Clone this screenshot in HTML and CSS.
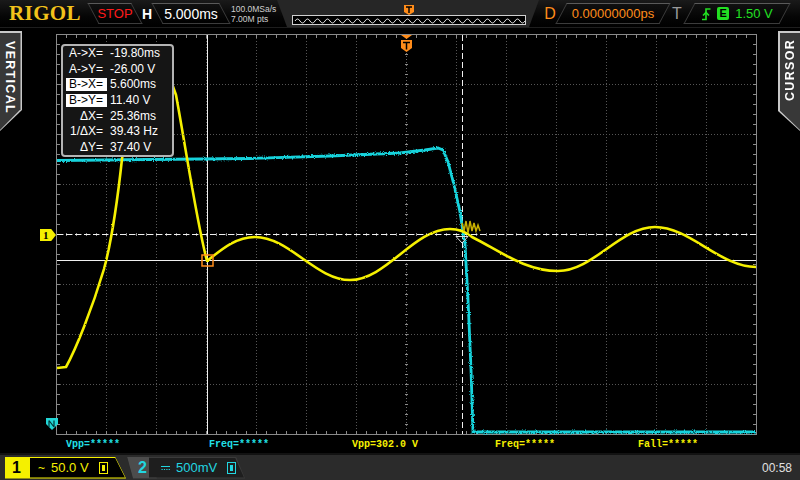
FILE: index.html
```html
<!DOCTYPE html>
<html>
<head>
<meta charset="utf-8">
<link rel="stylesheet" href="styles.css">
</head>
<body>
<div class="scope">
  <header class="topbar">
    <div class="logo">RIGOL</div>
    <div class="pbox lean-left stop-box"><span class="stop">STOP</span></div>
    <div class="hlabel">H</div>
    <div class="pbox lean-left time-box"><span>5.000ms</span></div>
    <div class="rate"><span>100.0MSa/s</span><span>7.00M pts</span></div>
    <div class="memory">
      <svg width="262" height="28" viewBox="0 0 262 28">
        <path d="M0,0 L262,0 L252,27 L10,27 Z" fill="#262626"/>
        <rect x="15.5" y="15.5" width="233" height="9" fill="#000" stroke="#cfcfcf"/>
        <path class="memwave" d="M18,21 q2.5,-4 5,0 t5,0 t5,0 t5,0 t5,0 t5,0 t5,0 t5,0 t5,0 t5,0 t5,0 t5,0 t5,0 t5,0 t5,0 t5,0 t5,0 t5,0 t5,0 t5,0 t5,0 t5,0 t5,0 t5,0 t5,0 t5,0 t5,0 t5,0 t5,0 t5,0 t5,0 t5,0 t5,0 t5,0 t5,0 t5,0 t5,0 t5,0 t5,0 t5,0 t5,0 t5,0 t5,0 t5,0 t5,0 t5,0"/>
        <path d="M127,5 h10 v7 l-5,3 l-5,-3 Z" fill="#ff8c1a"/>
        <path d="M129,7 h6 M132,7 v6" stroke="#000" stroke-width="1.4"/>
      </svg>
    </div>
    <div class="dlabel">D</div>
    <div class="pbox delay-box"><span>0.00000000ps</span></div>
    <div class="tlabel">T</div>
    <div class="pbox trig-box">
      <svg class="edge" width="10" height="14" viewBox="0 0 10 14">
        <path d="M1,12.5 H5 V2 H9.5" fill="none" stroke="#22e022" stroke-width="1.6"/>
        <path d="M2,8.5 L5,5.5 L8,8.5" fill="none" stroke="#22e022" stroke-width="1.6"/>
      </svg>
      <span class="ebadge">E</span>
      <span class="tlevel">1.50 V</span>
    </div>
  </header>

  <div class="main">
    <div class="side side-left">
      <div class="tab tab-left"><div class="tab-inner"><span>VERTICAL</span></div></div>
    </div>

    <div class="center">
      <div class="screen">
        <svg class="grid" width="701" height="401" viewBox="56 35 701 401">
          <defs>
            <filter id="noise" x="-5%" y="-5%" width="110%" height="110%">
              <feTurbulence type="fractalNoise" baseFrequency="0.9" numOctaves="1" seed="3"/>
              <feDisplacementMap in="SourceGraphic" scale="3.5" xChannelSelector="R" yChannelSelector="G"/>
            </filter>
            <filter id="noise2" x="-5%" y="-5%" width="110%" height="110%">
              <feTurbulence type="fractalNoise" baseFrequency="0.6" numOctaves="1" seed="7"/>
              <feDisplacementMap in="SourceGraphic" scale="2" xChannelSelector="R" yChannelSelector="G"/>
            </filter>
          </defs>
          <g class="dots">
            <path d="M106.5,36V435 M156.5,36V435 M206.5,36V435 M256.5,36V435 M306.5,36V435 M356.5,36V435 M456.5,36V435 M506.5,36V435 M556.5,36V435 M606.5,36V435 M656.5,36V435 M706.5,36V435"/>
            <path d="M57,85.5H756 M57,135.5H756 M57,185.5H756 M57,285.5H756 M57,335.5H756 M57,385.5H756"/>
          </g>
          <g class="axis">
            <path d="M406.5,36V435 M57,235.5H756"/>
          </g>
          <g class="border">
            <rect x="56.5" y="35.5" width="700" height="400" fill="none"/>
            <path d="M57,45.5h3 M57,55.5h3 M57,65.5h3 M57,75.5h3 M57,85.5h3 M57,95.5h3 M57,105.5h3 M57,115.5h3 M57,125.5h3 M57,135.5h3 M57,145.5h3 M57,155.5h3 M57,165.5h3 M57,175.5h3 M57,185.5h3 M57,195.5h3 M57,205.5h3 M57,215.5h3 M57,225.5h3 M57,235.5h3 M57,245.5h3 M57,255.5h3 M57,265.5h3 M57,275.5h3 M57,285.5h3 M57,295.5h3 M57,305.5h3 M57,315.5h3 M57,325.5h3 M57,335.5h3 M57,345.5h3 M57,355.5h3 M57,365.5h3 M57,375.5h3 M57,385.5h3 M57,395.5h3 M57,405.5h3 M57,415.5h3 M57,425.5h3"/>
            <path d="M756,45.5h-3 M756,55.5h-3 M756,65.5h-3 M756,75.5h-3 M756,85.5h-3 M756,95.5h-3 M756,105.5h-3 M756,115.5h-3 M756,125.5h-3 M756,135.5h-3 M756,145.5h-3 M756,155.5h-3 M756,165.5h-3 M756,175.5h-3 M756,185.5h-3 M756,195.5h-3 M756,205.5h-3 M756,215.5h-3 M756,225.5h-3 M756,235.5h-3 M756,245.5h-3 M756,255.5h-3 M756,265.5h-3 M756,275.5h-3 M756,285.5h-3 M756,295.5h-3 M756,305.5h-3 M756,315.5h-3 M756,325.5h-3 M756,335.5h-3 M756,345.5h-3 M756,355.5h-3 M756,365.5h-3 M756,375.5h-3 M756,385.5h-3 M756,395.5h-3 M756,405.5h-3 M756,415.5h-3 M756,425.5h-3"/>
            <path d="M66.5,36v3 M76.5,36v3 M86.5,36v3 M96.5,36v3 M106.5,36v3 M116.5,36v3 M126.5,36v3 M136.5,36v3 M146.5,36v3 M156.5,36v3 M166.5,36v3 M176.5,36v3 M186.5,36v3 M196.5,36v3 M206.5,36v3 M216.5,36v3 M226.5,36v3 M236.5,36v3 M246.5,36v3 M256.5,36v3 M266.5,36v3 M276.5,36v3 M286.5,36v3 M296.5,36v3 M306.5,36v3 M316.5,36v3 M326.5,36v3 M336.5,36v3 M346.5,36v3 M356.5,36v3 M366.5,36v3 M376.5,36v3 M386.5,36v3 M396.5,36v3 M406.5,36v3 M416.5,36v3 M426.5,36v3 M436.5,36v3 M446.5,36v3 M456.5,36v3 M466.5,36v3 M476.5,36v3 M486.5,36v3 M496.5,36v3 M506.5,36v3 M516.5,36v3 M526.5,36v3 M536.5,36v3 M546.5,36v3 M556.5,36v3 M566.5,36v3 M576.5,36v3 M586.5,36v3 M596.5,36v3 M606.5,36v3 M616.5,36v3 M626.5,36v3 M636.5,36v3 M646.5,36v3 M656.5,36v3 M666.5,36v3 M676.5,36v3 M686.5,36v3 M696.5,36v3 M706.5,36v3 M716.5,36v3 M726.5,36v3 M736.5,36v3 M746.5,36v3"/>
            <path d="M66.5,435v-3 M76.5,435v-3 M86.5,435v-3 M96.5,435v-3 M106.5,435v-3 M116.5,435v-3 M126.5,435v-3 M136.5,435v-3 M146.5,435v-3 M156.5,435v-3 M166.5,435v-3 M176.5,435v-3 M186.5,435v-3 M196.5,435v-3 M206.5,435v-3 M216.5,435v-3 M226.5,435v-3 M236.5,435v-3 M246.5,435v-3 M256.5,435v-3 M266.5,435v-3 M276.5,435v-3 M286.5,435v-3 M296.5,435v-3 M306.5,435v-3 M316.5,435v-3 M326.5,435v-3 M336.5,435v-3 M346.5,435v-3 M356.5,435v-3 M366.5,435v-3 M376.5,435v-3 M386.5,435v-3 M396.5,435v-3 M406.5,435v-3 M416.5,435v-3 M426.5,435v-3 M436.5,435v-3 M446.5,435v-3 M456.5,435v-3 M466.5,435v-3 M476.5,435v-3 M486.5,435v-3 M496.5,435v-3 M506.5,435v-3 M516.5,435v-3 M526.5,435v-3 M536.5,435v-3 M546.5,435v-3 M556.5,435v-3 M566.5,435v-3 M576.5,435v-3 M586.5,435v-3 M596.5,435v-3 M606.5,435v-3 M616.5,435v-3 M626.5,435v-3 M636.5,435v-3 M646.5,435v-3 M656.5,435v-3 M666.5,435v-3 M676.5,435v-3 M686.5,435v-3 M696.5,435v-3 M706.5,435v-3 M716.5,435v-3 M726.5,435v-3 M736.5,435v-3 M746.5,435v-3"/>
            <path d="M405,55.5h3 M405,65.5h3 M405,75.5h3 M405,85.5h3 M405,95.5h3 M405,105.5h3 M405,115.5h3 M405,125.5h3 M405,135.5h3 M405,145.5h3 M405,155.5h3 M405,165.5h3 M405,175.5h3 M405,185.5h3 M405,195.5h3 M405,205.5h3 M405,215.5h3 M405,225.5h3 M405,245.5h3 M405,255.5h3 M405,265.5h3 M405,275.5h3 M405,285.5h3 M405,295.5h3 M405,305.5h3 M405,315.5h3 M405,325.5h3 M405,335.5h3 M405,345.5h3 M405,355.5h3 M405,365.5h3 M405,375.5h3 M405,385.5h3 M405,395.5h3 M405,405.5h3 M405,415.5h3 M405,425.5h3"/>
            <path d="M66.5,234v3 M76.5,234v3 M86.5,234v3 M96.5,234v3 M106.5,234v3 M116.5,234v3 M126.5,234v3 M136.5,234v3 M146.5,234v3 M156.5,234v3 M166.5,234v3 M176.5,234v3 M186.5,234v3 M196.5,234v3 M206.5,234v3 M216.5,234v3 M226.5,234v3 M236.5,234v3 M246.5,234v3 M256.5,234v3 M266.5,234v3 M276.5,234v3 M286.5,234v3 M296.5,234v3 M306.5,234v3 M316.5,234v3 M326.5,234v3 M336.5,234v3 M346.5,234v3 M356.5,234v3 M366.5,234v3 M376.5,234v3 M386.5,234v3 M396.5,234v3 M416.5,234v3 M426.5,234v3 M436.5,234v3 M446.5,234v3 M456.5,234v3 M466.5,234v3 M476.5,234v3 M486.5,234v3 M496.5,234v3 M506.5,234v3 M516.5,234v3 M526.5,234v3 M536.5,234v3 M546.5,234v3 M556.5,234v3 M566.5,234v3 M576.5,234v3 M586.5,234v3 M596.5,234v3 M606.5,234v3 M616.5,234v3 M626.5,234v3 M636.5,234v3 M646.5,234v3 M656.5,234v3 M666.5,234v3 M676.5,234v3 M686.5,234v3 M696.5,234v3 M706.5,234v3 M716.5,234v3 M726.5,234v3 M736.5,234v3 M746.5,234v3"/>
          </g>

          <path class="cur-dash" d="M462.5,36V435 M57,235.5H756"/>
          <path class="cur-solid" d="M207.5,36V435 M57,261.5H756"/>

          <path class="trace2" d="M57,161.5 L150,160.5 L250,159.5 L330,157 L400,154 L425,151 L438,149 L443,151 L448,163 L454,186 L460,213 L465,246 L468,300 L471,370 L473,433 L756,433"/>

          <path class="trace1" d="M57,369 L66,368 C76,350 92,310 104,270 C110,248 116,215 122,160 L130,110 L150,70 L166,68 L176,96 C186,150 197,225 207,262 C222,250 236,238 255,238 C289,238 316,281 350,281 C386,281 414,230 450,230 C460,230 466,233 472,238 C500,252 525,272 558,272 C593,272 620,228 655,228 C690,228 720,268 756,268"/>
          <path class="ring" d="M462,224 l2,8 l2,-10 l2,12 l2,-12 l2,10 l2,-8 l2,8 l2,-6 l2,6"/>

          <rect class="amark" x="202" y="256" width="11" height="11"/>
          <path class="bmark" d="M456,237.5 H468 L462,244 Z"/>

          <path d="M401,36 h11 l-5.5,4 Z" fill="#ff8c1a"/>
          <path d="M401,41 h11 v8 l-5.5,4 l-5.5,-4 Z" fill="#ff8c1a"/>
          <path d="M403,43.5 h7 M406.5,43.5 v7" stroke="#000" stroke-width="1.5"/>
        </svg>

        <div class="ch1-marker">1</div>
        <svg class="ch2-marker" width="12" height="12" viewBox="0 0 12 12">
          <path d="M0,0 H12 V6 L6,12 L0,6 Z" fill="#22d6d6"/>
          <path d="M3,2.5 V9 M3,2.5 L8,9 M8,2.5 V9" stroke="#003333" stroke-width="1.2" fill="none"/>
        </svg>

        <div class="cursor-box">
          <div class="row"><span class="lbl">A-&gt;X=</span><span class="val">-19.80ms</span></div>
          <div class="row"><span class="lbl">A-&gt;Y=</span><span class="val">-26.00 V</span></div>
          <div class="row"><span class="lbl"><b class="hl">B-&gt;X=</b></span><span class="val">5.600ms</span></div>
          <div class="row"><span class="lbl"><b class="hl">B-&gt;Y=</b></span><span class="val">11.40 V</span></div>
          <div class="row"><span class="lbl">ΔX=</span><span class="val">25.36ms</span></div>
          <div class="row"><span class="lbl">1/ΔX=</span><span class="val">39.43 Hz</span></div>
          <div class="row"><span class="lbl">ΔY=</span><span class="val">37.40 V</span></div>
        </div>
      </div>
      <div class="meas">
        <span class="m cyan">Vpp=*****</span>
        <span class="m cyan">Freq=*****</span>
        <span class="m yellow">Vpp=302.0 V</span>
        <span class="m yellow">Freq=*****</span>
        <span class="m yellow">Fall=*****</span>
      </div>
    </div>

    <div class="side side-right">
      <div class="tab tab-right"><div class="tab-inner"><span>CURSOR</span></div></div>
    </div>
  </div>

  <footer class="bottombar">
    <div class="chan chan1">
      <span class="chnum">1</span>
      <div class="chbox">
        <span class="cpl">~</span><span class="scale">50.0 V</span>
        <span class="bat"><i></i></span>
      </div>
    </div>
    <div class="chan chan2">
      <span class="chnum">2</span>
      <div class="chbox">
        <svg class="dc" width="9" height="6" viewBox="0 0 9 6"><path d="M0,1.5H9" stroke="currentColor" stroke-width="1.2"/><path d="M0.5,4.5H9" stroke="currentColor" stroke-width="1.2" stroke-dasharray="1.2 1.2"/></svg>
        <span class="scale">500mV</span>
        <span class="bat"><i></i></span>
      </div>
    </div>
    <div class="clock">00:58</div>
  </footer>
</div>
</body>
</html>
```

FILE: styles.css
```css
* { box-sizing: border-box; margin: 0; padding: 0; }
html, body { width: 800px; height: 480px; overflow: hidden; background: #000; }
body { font-family: "Liberation Sans", Arial, sans-serif; color: #fff; }

.scope { width: 800px; height: 480px; display: flex; flex-direction: column; background: #000; }

/* ---------- top bar ---------- */
.topbar {
  height: 28px; flex: none; display: flex; align-items: center;
  background: linear-gradient(#1a1a1a, #060606 60%, #000);
  border-bottom: 1px solid #1e1e1e;
}
.logo {
  width: 90px; padding-left: 9px; font-family: "Liberation Serif", serif; font-weight: bold;
  font-size: 21px; letter-spacing: 0.4px; color: #f2c21b; line-height: 1;
}
.pbox { position: relative; height: 21px; display: flex; align-items: center; justify-content: center; }
.pbox::before {
  content: ""; position: absolute; inset: 0; transform: skewX(-28deg);
  background: linear-gradient(#101010, #000); border: 1px solid #3c3c3c; border-top-color: #5a5a5a;
}
.pbox.lean-left::before { transform: skewX(28deg); }
.pbox > * { position: relative; }
.stop-box { width: 44px; margin-left: 3px; }
.stop { color: #ff1a1a; font-size: 13px; }
.hlabel { width: 20px; text-align: center; font-weight: bold; font-size: 14px; }
.time-box { width: 68px; font-size: 14px; }
.rate { width: 52px; margin-left: 6px; display: flex; flex-direction: column; font-size: 8.5px; line-height: 10px; color: #d0d0d0; }
.memory { width: 262px; height: 28px; margin-left: -6px; align-self: flex-start; }
.memory svg { display: block; }
.memwave { fill: none; stroke: #e8e8e8; stroke-width: 1; }
.dlabel { width: 22px; text-align: center; color: #ff8c1a; font-size: 16px; }
.delay-box { width: 104px; color: #ff8c1a; font-size: 13px; }
.tlabel { width: 24px; text-align: center; color: #9a9a9a; font-size: 16px; }
.trig-box { width: 96px; gap: 6px; font-size: 13px; color: #22e022; }
.ebadge { background: #22e022; color: #000; font-weight: bold; font-size: 11px; width: 12px; height: 13px; line-height: 13px; text-align: center; border-radius: 2px; }
.edge { display: block; }

/* ---------- main ---------- */
.main { flex: 1; display: flex; min-height: 0; }
.side { width: 56px; flex: none; position: relative; padding-top: 3px; }
.side-right { width: 43px; display: flex; justify-content: flex-end; }
.tab { width: 22px; background: #c8c8c8; }
.tab-left { height: 100px; clip-path: polygon(0 0, 100% 0, 100% 79%, 0 100%); padding: 1.5px 1.5px 0 0; }
.tab-right { height: 100px; clip-path: polygon(0 0, 100% 0, 100% 100%, 0 80%); padding: 1.5px 0 0 1.5px; }
.tab-inner { width: 100%; height: 100%; background: #383838; display: flex; align-items: flex-start; justify-content: center; }
.tab-left .tab-inner { clip-path: polygon(0 0, 100% 0, 100% 78%, 0 99%); padding-top: 8px; }
.tab-right .tab-inner { clip-path: polygon(0 0, 100% 0, 100% 99%, 0 79%); padding-top: 6px; }
.tab-inner span { writing-mode: vertical-rl; font-weight: bold; font-size: 12.5px; letter-spacing: 1.3px; color: #fff; }
.tab-right .tab-inner span { transform: rotate(180deg); }

.center { width: 701px; flex: none; padding-top: 6px; }
.screen { position: relative; width: 701px; height: 401px; }
.grid { display: block; }
.dots path { stroke: #555; stroke-width: 1; stroke-dasharray: 1 2; fill: none; }
.axis path { stroke: #6a6a6a; stroke-width: 1; stroke-dasharray: 1 2; fill: none; }
.border rect, .border path { stroke: #8a8a8a; stroke-width: 1; fill: none; }
.cur-dash { stroke: #f0f0f0; stroke-width: 1; stroke-dasharray: 6 3; fill: none; }
.cur-solid { stroke: #f0f0f0; stroke-width: 1; fill: none; }
.trace2 { stroke: #19d3dc; stroke-width: 2.8; fill: none; filter: url(#noise); }
.trace1 { stroke: #f5f000; stroke-width: 2.6; fill: none; filter: url(#noise2); stroke-linejoin: round; }
.ring { stroke: #c8b000; stroke-width: 1.5; fill: none; }
.amark { fill: none; stroke: #ff8c1a; stroke-width: 1.5; }
.bmark { fill: none; stroke: #e0e0e0; stroke-width: 1; }

.ch1-marker {
  position: absolute; left: -16px; top: 195px; width: 16px; height: 12px; background: #f5f000; color: #000;
  font-family: "Liberation Serif", serif; font-weight: bold; font-size: 11px; line-height: 12px;
  padding-left: 3px; clip-path: polygon(0 0, 70% 0, 100% 50%, 70% 100%, 0 100%);
}
.ch2-marker { position: absolute; left: -10px; top: 384px; }

.cursor-box {
  position: absolute; left: 5px; top: 10px; width: 113px; height: 113px;
  background: #151515; border: 2px solid #b4b4b4; border-radius: 4px;
  padding: 0; font-size: 12px; line-height: 15.7px;
}
.row { display: flex; height: 15.7px; align-items: center; }
.lbl { width: 40px; text-align: right; color: #fff; flex: none; }
.hl { font-weight: normal; background: #fff; color: #000; display: inline-block; width: 41px; margin-right: -4px; padding-right: 4px; height: 13px; line-height: 13px; }
.val { padding-left: 7px; color: #fff; }

.meas { height: 18px; display: flex; padding-left: 10px; align-items: center; }
.m { width: 143px; flex: none; font-family: "Liberation Mono", monospace; font-size: 10px; font-weight: bold; }
.cyan { color: #22e0e8; }
.yellow { color: #f5f000; }

/* ---------- bottom bar ---------- */
.bottombar {
  height: 27px; flex: none; display: flex; align-items: center; background: #2b2b2b;
  border-top: 2px solid #121212; padding-left: 5px;
}
.chan { display: flex; align-items: stretch; height: 22px; }
.chan1 { width: 121px; background: #f5f000; clip-path: polygon(0 0, calc(100% - 11px) 0, 100% 100%, 0 100%); }
.chan2 { width: 118px; margin-left: 1px; background: #3a3a3a; clip-path: polygon(0 0, calc(100% - 9px) 0, 100% 100%, 6px 100%); }
.chnum { width: 25px; flex: none; font-size: 16px; font-weight: bold; line-height: 22px; padding-left: 7px; }
.chan1 .chnum { color: #000; }
.chan2 .chnum { width: 30px; padding-left: 11px; background: #4c4c4c; color: #22d6e0; clip-path: polygon(0 0, 72% 0, 100% 100%, 20% 100%); }
.chbox { flex: 1; display: flex; align-items: center; gap: 6px; font-size: 13px; padding-left: 8px; margin: 1px 1px 1px 0; }
.chan1 .chbox { background: #000; color: #f5f000; clip-path: polygon(0 0, calc(100% - 10px) 0, 100% 100%, 0 100%); }
.chan2 .chbox { background: #1e1e1e; color: #22d6e0; clip-path: polygon(0 0, calc(100% - 9px) 0, 100% 100%, 0 100%); margin-left: -8px; padding-left: 12px; }
.cpl { font-size: 12px; }
.dc { display: block; }
.bat { width: 9px; height: 12px; border: 1.5px solid currentColor; display: flex; align-items: center; justify-content: center; margin-left: 4px; }
.bat i { width: 3px; height: 6px; background: currentColor; display: block; }
.clock { margin-left: auto; margin-right: 8px; font-size: 12px; color: #e0e0e0; }
```
